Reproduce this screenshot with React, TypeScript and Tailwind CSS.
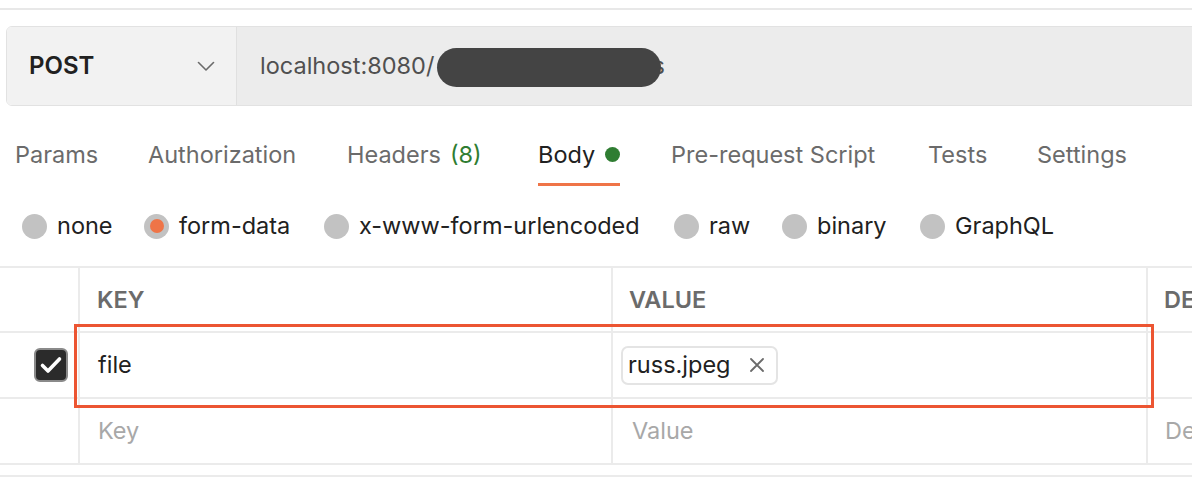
import React from 'react';

const tabs = [
  { label: 'Params', w: 'w-[133px]' },
  { label: 'Authorization', w: 'w-[199px]' },
  { label: 'Headers', w: 'w-[191px]', count: '(8)' },
  { label: 'Body', w: 'w-[133px]', active: true },
  { label: 'Pre-request Script', w: 'w-[257px]' },
  { label: 'Tests', w: 'w-[109px]' },
  { label: 'Settings', w: 'w-[150px]' },
];

const bodyModes = [
  { label: 'none', w: 'w-[122px]' },
  { label: 'form-data', w: 'w-[180px]', checked: true },
  { label: 'x-www-form-urlencoded', w: 'w-[350px]' },
  { label: 'raw', w: 'w-[108px]' },
  { label: 'binary', w: 'w-[138px]' },
  { label: 'GraphQL', w: 'w-[160px]' },
];

const ChevronDown = () => (
  <svg width="18" height="10" viewBox="0 0 18 10" fill="none" stroke="#6b6b6b" strokeWidth="1.6" strokeLinecap="round" strokeLinejoin="round">
    <path d="M1.5 1.5l7.5 7.5 7.5-7.5" />
  </svg>
);

export default function App() {
  return (
    <div className="w-[1192px] h-[488px] overflow-hidden bg-white text-[23.5px] text-[#212121] font-['Inter','Noto_Sans',sans-serif]">
      {/* top divider */}
      <div className="pt-2">
        <div className="h-[2px] bg-[#e8e8e8]" />
      </div>

      {/* URL bar */}
      <div className="ml-[6px] mt-[16px] flex h-[80px] w-[1220px] rounded-l-[6px] border border-[#e2e2e2] overflow-hidden">
        <div className="flex w-[230px] shrink-0 items-center justify-between bg-[#f2f2f2] pl-[22px] pr-[21px] border-r border-[#e0e0e0]">
          <span className="font-semibold text-[#212121] text-[24px]">POST</span>
          <ChevronDown />
        </div>
        <div className="relative flex flex-1 items-center bg-[#ececec] pl-[23px] text-[#505050]">
          <span>localhost:8080/</span>
          <span className="ml-[218px]">s</span>
          <span className="absolute left-[200px] top-[21px] h-[39px] w-[224px] rounded-full bg-[#444444]" />
        </div>
      </div>

      {/* Tabs */}
      <div className="mt-[20px] flex pl-[15px]">
        {tabs.map((t) => (
          <div key={t.label} className={`${t.w} shrink-0`}>
            <div className="inline-flex flex-col">
              <div className="flex items-center h-[57px]">
                <span className={t.active ? 'text-[#212121]' : 'text-[#6b6b6b]'}>{t.label}</span>
                {t.count && <span className="ml-[9px] text-[#2f7d32]">{t.count}</span>}
                {t.active && <span className="ml-[10px] h-[15px] w-[15px] rounded-full bg-[#2f7d32]" />}
              </div>
              <div className={`h-[3px] ${t.active ? 'bg-[#ef7447]' : 'bg-transparent'}`} />
            </div>
          </div>
        ))}
      </div>

      {/* Body modes */}
      <div className="mt-[22px] flex h-[36px] items-center pl-[22px]">
        {bodyModes.map((m) => (
          <div key={m.label} className={`${m.w} flex shrink-0 items-center`}>
            <span className="flex h-[25px] w-[25px] items-center justify-center rounded-full bg-[#c2c2c2]">
              {m.checked && <span className="h-[14px] w-[14px] rounded-full bg-[#ef7447]" />}
            </span>
            <span className="ml-[10px]">{m.label}</span>
          </div>
        ))}
      </div>

      {/* Table */}
      <div className="mt-[22px] w-[1240px] border-t-2 border-[#ebebeb]">
        <div className="flex h-[65px] border-b-2 border-[#ebebeb]">
          <div className="w-[80px] shrink-0 border-r-2 border-[#ebebeb]" />
          <div className="flex w-[533px] shrink-0 items-center border-r-2 border-[#ebebeb] pl-[17px] font-semibold text-[#6b6b6b]">KEY</div>
          <div className="flex w-[535px] shrink-0 items-center border-r-2 border-[#ebebeb] pl-[16px] font-semibold text-[#6b6b6b]">VALUE</div>
          <div className="flex flex-1 items-center pl-[16px] font-semibold text-[#6b6b6b]">DESCRIPTION</div>
        </div>

        <div className="relative flex h-[66px] border-b-2 border-[#ebebeb]">
          <div className="flex w-[80px] shrink-0 items-center justify-end border-r-2 border-[#ebebeb] pr-[10px]">
            <span className="flex h-[34px] w-[34px] items-center justify-center rounded-[6px] border-2 border-[#8a8a8a] bg-[#2b2b2b]">
              <svg width="24" height="18" viewBox="0 0 24 18" fill="none" stroke="white" strokeWidth="3.6" strokeLinecap="round" strokeLinejoin="round">
                <path d="M3.5 9.5l5.5 5.5L20.5 3" />
              </svg>
            </span>
          </div>
          <div className="flex w-[533px] shrink-0 items-center border-r-2 border-[#ebebeb] pl-[18px]">file</div>
          <div className="flex w-[535px] shrink-0 items-center border-r-2 border-[#ebebeb] pl-[8px]">
            <span className="flex h-[39px] items-center rounded-[7px] border-2 border-[#e4e4e4] pl-[5px] pr-[11px]">
              russ.jpeg
              <svg className="ml-[18px]" width="16" height="16" viewBox="0 0 16 16" fill="none" stroke="#6b6b6b" strokeWidth="1.8" strokeLinecap="round">
                <path d="M2 2l12 12M14 2L2 14" />
              </svg>
            </span>
          </div>
          <div className="flex-1" />
          {/* highlight box */}
          <div className="pointer-events-none absolute left-[74px] top-[-9px] h-[84px] w-[1080px] border-[3px] border-[#ec5532]" />
        </div>

        <div className="flex h-[66px] border-b-2 border-[#ebebeb] text-[#a8a8a8]">
          <div className="w-[80px] shrink-0 border-r-2 border-[#ebebeb]" />
          <div className="flex w-[533px] shrink-0 items-center border-r-2 border-[#ebebeb] pl-[18px]">Key</div>
          <div className="flex w-[535px] shrink-0 items-center border-r-2 border-[#ebebeb] pl-[19px]">Value</div>
          <div className="flex flex-1 items-center pl-[17px]">Description</div>
        </div>
      </div>
      <div className="mt-[10px] h-[2px] bg-[#ebebeb]" />
    </div>
  );
}
